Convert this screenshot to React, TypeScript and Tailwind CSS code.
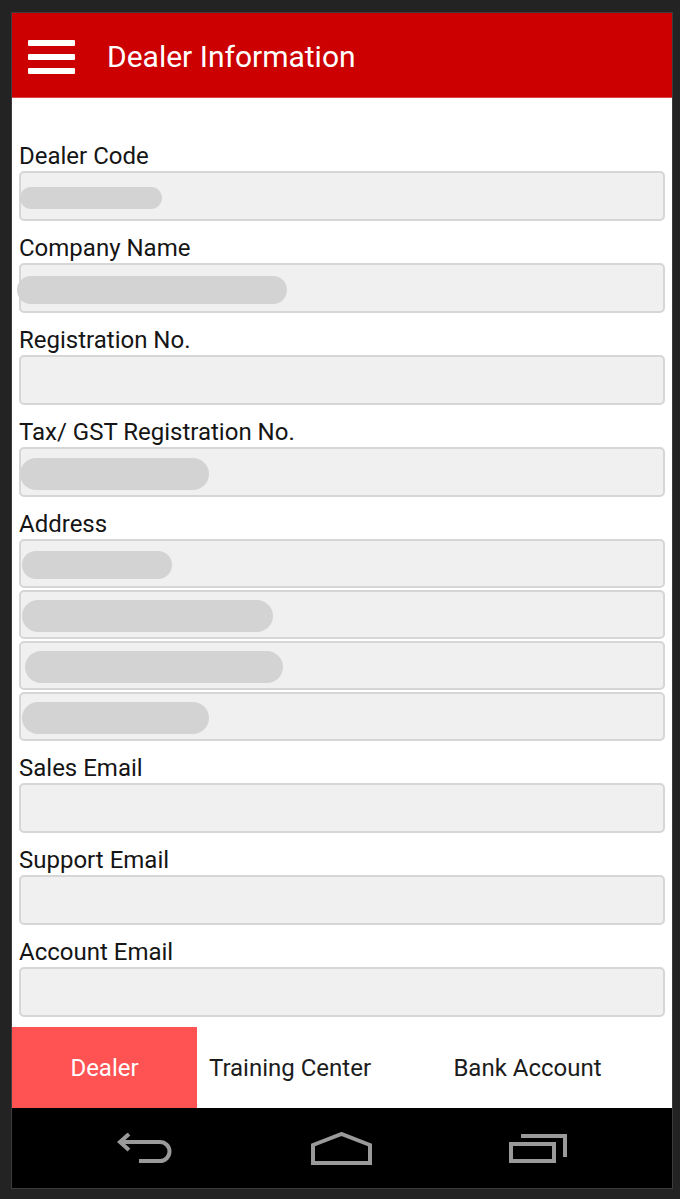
import type { ReactNode } from "react";

type Field = { label: string; blobs?: { w: number; h: number; ml: number }[] };

const fields: Field[] = [
  { label: "Dealer Code", blobs: [{ w: 142, h: 22, ml: -1 }] },
  { label: "Company Name", blobs: [{ w: 270, h: 28, ml: -4 }] },
  { label: "Registration No." },
  { label: "Tax/ GST Registration No.", blobs: [{ w: 189, h: 32, ml: -1 }] },
  {
    label: "Address",
    blobs: [
      { w: 150, h: 28, ml: 1 },
      { w: 251, h: 32, ml: 1 },
      { w: 258, h: 32, ml: 4 },
      { w: 187, h: 32, ml: 1 },
    ],
  },
  { label: "Sales Email" },
  { label: "Support Email" },
  { label: "Account Email" },
];

function Box({ blob, tall = true, children }: { blob?: { w: number; h: number; ml: number }; tall?: boolean; children?: ReactNode }) {
  return (
    <div
      className={`flex items-center rounded-[5px] border-2 border-[#d6d6d6] bg-[#f0f0f0] pt-[3px] ${tall ? "h-[50px]" : "h-[49px]"}`}
    >
      {blob && (
        <div
          className="rounded-full bg-[#d3d3d3]"
          style={{ width: blob.w, height: blob.h, marginLeft: blob.ml }}
        />
      )}
      {children}
    </div>
  );
}

function FieldRow({ f, first }: { f: Field; first: boolean }) {
  const multi = f.label === "Address";
  return (
    <div className={first ? "" : "mt-[13px]"}>
      <p className="mb-[1px] text-[24px] leading-[28px] text-[#151515]">{f.label}</p>
      {multi ? (
        <div className="flex flex-col gap-[2px]">
          {f.blobs!.map((b, i) => (
            <Box key={i} blob={b} tall={false} />
          ))}
        </div>
      ) : (
        <Box blob={f.blobs?.[0]} />
      )}
    </div>
  );
}

function BackIcon() {
  return (
    <svg width="57" height="30" viewBox="0 0 57 30" fill="none" stroke="#9a9a9a" strokeWidth="4">
      <path d="M12 1 L3 9 L12 17" strokeLinejoin="miter" />
      <path d="M3 9 H43 A9.5 9.5 0 0 1 43 28 H22" />
    </svg>
  );
}

function HomeIcon() {
  return (
    <svg width="61" height="33" viewBox="0 0 61 33" fill="none" stroke="#9a9a9a" strokeWidth="4">
      <path d="M2 31 V13 L30.5 2 L59 13 V31 Z" strokeLinejoin="miter" />
    </svg>
  );
}

function RecentsIcon() {
  return (
    <svg width="58" height="30" viewBox="0 0 58 30" fill="none" stroke="#9a9a9a" strokeWidth="4">
      <rect x="2" y="11" width="43" height="17" />
      <path d="M12 3 H56 V24" />
    </svg>
  );
}

export default function App() {
  return (
    <div
      className="h-[1199px] w-[680px] bg-[#232323] pb-[11px] pl-[12px] pr-[8px] pt-[13px]"
      style={{ fontFamily: "Roboto, 'Liberation Sans', sans-serif" }}
    >
      <div className="flex h-full flex-col overflow-hidden shadow-[0_0_0_1px_#3c3c3c]">
        <div className="flex h-[85px] shrink-0 items-center border-b border-[#d9463f] bg-[#cc0000] pl-[16px] pt-[4px]">
          <div className="flex w-[47px] flex-col gap-[8px]">
            <span className="h-[6px] rounded-[1px] bg-white" />
            <span className="h-[6px] rounded-[1px] bg-white" />
            <span className="h-[6px] rounded-[1px] bg-white" />
          </div>
          <h1 className="ml-[32px] text-[30px] leading-none text-white">Dealer Information</h1>
        </div>

        <div className="flex-1 overflow-hidden bg-white px-[7px] pt-[44px]">
          {fields.map((f, i) => (
            <FieldRow key={f.label} f={f} first={i === 0} />
          ))}
        </div>

        <div className="flex h-[81px] shrink-0 bg-white text-[24px] text-[#1c1c1c]">
          <div className="flex w-[185px] items-center justify-center bg-[#ff5252] text-white">Dealer</div>
          <div className="flex w-[186px] items-center justify-center">Training Center</div>
          <div className="flex flex-1 items-center justify-center">Bank Account</div>
        </div>

        <div className="flex h-[80px] shrink-0 items-center justify-center gap-[137px] bg-black">
          <BackIcon />
          <HomeIcon />
          <RecentsIcon />
        </div>
      </div>
    </div>
  );
}
